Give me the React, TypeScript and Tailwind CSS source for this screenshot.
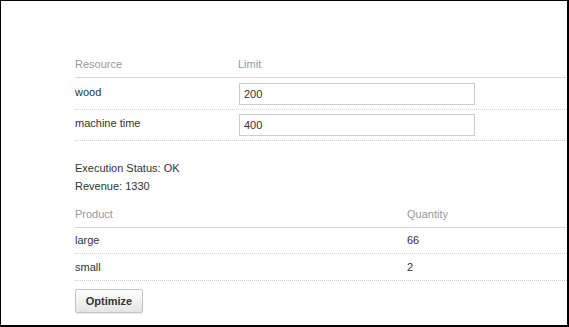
const resources = [
  { name: "wood", limit: "200" },
  { name: "machine time", limit: "400" },
];

const products = [
  { name: "large", qty: "66" },
  { name: "small", qty: "2" },
];

export default function App() {
  return (
    <div className="w-[569px] h-[327px] bg-white border-l border-t border-r-2 border-b-2 border-black pl-[74px] pt-[50px] font-['Liberation_Sans',Arial,sans-serif] text-[11px] text-[#333]">
      <div className="flex flex-col">
        <div className="flex h-[27px] items-center border-b border-[#d8d8d8] text-[#999]">
          <div className="w-[163px]">Resource</div>
          <div>Limit</div>
        </div>
        {resources.map((r, i) => (
          <div
            key={r.name}
            className={`flex items-center border-b border-dotted border-[#cfcfcf] ${i === 0 ? "h-[32px]" : "h-[31px]"}`}
          >
            <div className="w-[164px] -mt-[3px]">{r.name}</div>
            <input
              readOnly
              value={r.limit}
              className="w-[236px] h-[22px] border border-[#ccc] px-[4px] text-[11px] text-[#333] outline-none"
            />
          </div>
        ))}
      </div>

      <div className="mt-[18px] leading-[18px]">
        <div>Execution Status: OK</div>
        <div>Revenue: 1330</div>
      </div>

      <div className="flex flex-col mt-[6px]">
        <div className="flex h-[27px] items-center border-b border-[#d8d8d8] text-[#999]">
          <div className="w-[332px]">Product</div>
          <div>Quantity</div>
        </div>
        {products.map((p, i) => (
          <div
            key={p.name}
            className={`flex items-center border-b border-dotted border-[#cfcfcf] ${i === 0 ? "h-[26px]" : "h-[27px]"}`}
          >
            <div className="w-[332px]">{p.name}</div>
            <div>{p.qty}</div>
          </div>
        ))}
      </div>

      <button className="mt-[8px] w-[68px] h-[24px] rounded-[2px] border border-[#c4c4c4] bg-gradient-to-b from-white to-[#e4e4e4] text-[11px] font-bold text-[#333] shadow-[0_1px_1px_rgba(0,0,0,0.08)]">
        Optimize
      </button>
    </div>
  );
}
